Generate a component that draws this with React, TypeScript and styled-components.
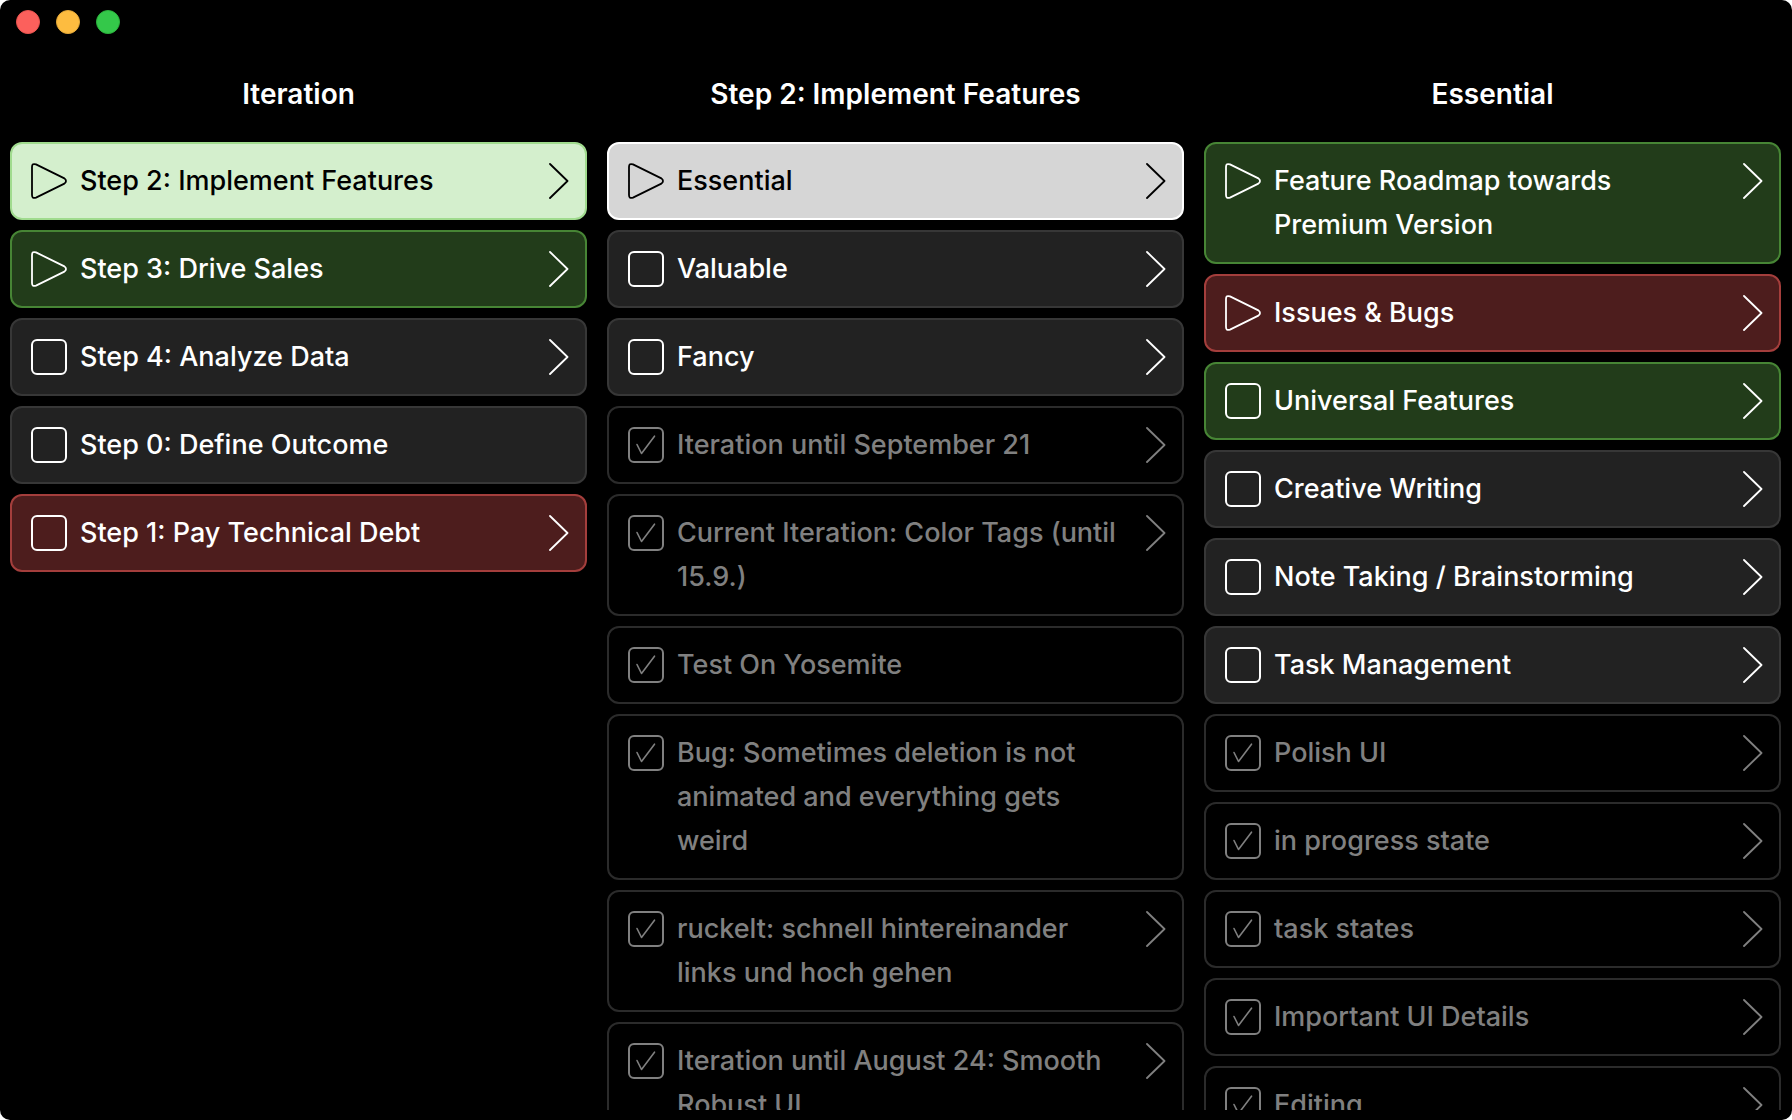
import React, { useId, useState } from 'react';
import styled, { createGlobalStyle, css } from 'styled-components';

type Tone = 'plain' | 'green' | 'red' | 'selected' | 'selectedGreen' | 'done';
type Status = 'active' | 'open' | 'done';

interface Task {
  title: string;
  status: Status;
  tone: Tone;
  nested?: boolean;
}

interface TaskColumn {
  heading: string;
  tasks: Task[];
}

const tones: Record<Tone, { fill: string; edge: string; ink: string }> = {
  plain: { fill: '#222222', edge: '#373737', ink: '#ffffff' },
  green: { fill: '#223c1a', edge: '#478535', ink: '#ffffff' },
  red: { fill: '#4d1d1d', edge: '#a43e3c', ink: '#ffffff' },
  selected: { fill: '#d6d6d6', edge: '#ffffff', ink: '#000000' },
  selectedGreen: { fill: '#d4efcd', edge: '#a0db8e', ink: '#000000' },
  done: { fill: '#000000', edge: '#2b2b2b', ink: '#808080' },
};

const task = (title: string, status: Status, tone: Tone, nested = true): Task => ({
  title,
  status,
  tone,
  nested,
});

const columns: TaskColumn[] = [
  {
    heading: 'Iteration',
    tasks: [
      task('Step 2: Implement Features', 'active', 'selectedGreen'),
      task('Step 3: Drive Sales', 'active', 'green'),
      task('Step 4: Analyze Data', 'open', 'plain'),
      task('Step 0: Define Outcome', 'open', 'plain', false),
      task('Step 1: Pay Technical Debt', 'open', 'red'),
    ],
  },
  {
    heading: 'Step 2: Implement Features',
    tasks: [
      task('Essential', 'active', 'selected'),
      task('Valuable', 'open', 'plain'),
      task('Fancy', 'open', 'plain'),
      task('Iteration until September 21', 'done', 'done'),
      task('Current Iteration: Color Tags (until 15.9.)', 'done', 'done'),
      task('Test On Yosemite', 'done', 'done', false),
      task('Bug: Sometimes deletion is not animated and everything gets weird', 'done', 'done', false),
      task('ruckelt: schnell hintereinander links und hoch gehen', 'done', 'done'),
      task('Iteration until August 24: Smooth Robust UI', 'done', 'done'),
    ],
  },
  {
    heading: 'Essential',
    tasks: [
      task('Feature Roadmap towards Premium Version', 'active', 'green'),
      task('Issues & Bugs', 'active', 'red'),
      task('Universal Features', 'open', 'green'),
      task('Creative Writing', 'open', 'plain'),
      task('Note Taking / Brainstorming', 'open', 'plain'),
      task('Task Management', 'open', 'plain'),
      task('Polish UI', 'done', 'done'),
      task('in progress state', 'done', 'done'),
      task('task states', 'done', 'done'),
      task('Important UI Details', 'done', 'done'),
      task('Editing', 'done', 'done'),
    ],
  },
];

const GlobalStyle = createGlobalStyle`
  *, *::before, *::after { box-sizing: border-box; }
  body {
    margin: 0;
    background: #ffffff;
    font-family: Inter, "Liberation Sans", sans-serif;
  }
`;

const bareButton = css`
  appearance: none;
  margin: 0;
  padding: 0;
  border: 0;
  background: none;
  color: inherit;
  font: inherit;
`;

const Window = styled.div`
  display: flex;
  flex-direction: column;
  height: 100vh;
  padding-bottom: 10px;
  overflow: hidden;
  border-radius: 10px;
  background: #000000;
`;

const TitleBar = styled.header`
  display: flex;
  flex: none;
  align-items: center;
  gap: 16px;
  height: 44px;
  padding: 0 16px;
`;

const WindowButton = styled.button<{ $color: string; $rim: string }>`
  ${bareButton}
  width: 24px;
  height: 24px;
  border: 1px solid ${(p) => p.$rim};
  border-radius: 50%;
  background: ${(p) => p.$color};
`;

const Board = styled.main`
  display: grid;
  flex: 1;
  grid-template-columns: repeat(3, minmax(0, 1fr));
  gap: 20px;
  min-height: 0;
  padding: 0 11px 0 10px;
`;

const Column = styled.section`
  display: flex;
  flex-direction: column;
  min-height: 0;
`;

const Heading = styled.h2`
  flex: none;
  margin: 0;
  padding: 28px 0 26px;
  color: #ffffff;
  font-size: 28px;
  font-weight: 600;
  line-height: 44px;
  text-align: center;
`;

const TaskList = styled.ul`
  display: flex;
  flex: 1;
  flex-direction: column;
  gap: 10px;
  min-height: 0;
  margin: 0;
  padding: 0;
  overflow-y: auto;
  list-style: none;
  scrollbar-width: none;
`;

const Card = styled.li<{ $tone: Tone }>`
  display: grid;
  flex: none;
  grid-template-columns: 36px minmax(0, 1fr) 20px;
  gap: 13px;
  align-items: start;
  padding: 15px 16px 15px 19px;
  border: 2px solid ${(p) => tones[p.$tone].edge};
  border-radius: 12px;
  background: ${(p) => tones[p.$tone].fill};
  color: ${(p) => tones[p.$tone].ink};
`;

const StatusSlot = styled.span`
  display: grid;
  align-items: center;
  height: 44px;

  > * {
    grid-area: 1 / 1;
  }
`;

const PlayButton = styled.button`
  ${bareButton}
  height: 36px;
`;

const Tick = styled.input`
  appearance: none;
  width: 36px;
  height: 36px;
  margin: 0;
  border: 2px solid currentColor;
  border-radius: 6px;
  color: inherit;
`;

const Title = styled.label`
  font-size: 27px;
  font-weight: 500;
  line-height: 44px;
`;

const OpenButton = styled.button`
  ${bareButton}
  display: flex;
  align-items: center;
  height: 44px;
`;

const Glyph = styled.svg`
  display: block;
  fill: none;
  stroke: currentColor;
  stroke-linecap: round;
  stroke-linejoin: round;
  pointer-events: none;
`;

const PlayGlyph = () => (
  <Glyph width="36" height="36" viewBox="0 0 36 36" strokeWidth="1.8" aria-hidden="true">
    <path d="M1 4V32Q1 36 5 34.6L33.4 20.6Q36.6 18 33.4 15.4L5 1.4Q1 0 1 4Z" />
  </Glyph>
);

const CheckGlyph = () => (
  <Glyph width="36" height="36" viewBox="0 0 36 36" strokeWidth="1.6" aria-hidden="true">
    <path d="M9 17.5L13.5 26.5L26.5 9.2" />
  </Glyph>
);

const ChevronGlyph = () => (
  <Glyph width="20" height="36" viewBox="0 0 20 36" strokeWidth="1.8" aria-hidden="true">
    <path d="M1 1L18.5 18L1 35" />
  </Glyph>
);

function TaskCard({ item }: { item: Task }) {
  const id = useId();
  const [checked, setChecked] = useState(item.status === 'done');

  return (
    <Card $tone={item.tone}>
      <StatusSlot>
        {item.status === 'active' ? (
          <PlayButton id={id} type="button">
            <PlayGlyph />
          </PlayButton>
        ) : (
          <>
            <Tick
              id={id}
              type="checkbox"
              checked={checked}
              onChange={(event) => setChecked(event.target.checked)}
            />
            {checked && <CheckGlyph />}
          </>
        )}
      </StatusSlot>
      <Title htmlFor={id}>{item.title}</Title>
      {item.nested && (
        <OpenButton type="button" aria-label={`Open ${item.title}`}>
          <ChevronGlyph />
        </OpenButton>
      )}
    </Card>
  );
}

export default function App() {
  return (
    <>
      <GlobalStyle />
      <Window>
        <TitleBar>
          <WindowButton type="button" aria-label="Close" $color="#fc605c" $rim="#e9544f" />
          <WindowButton type="button" aria-label="Minimize" $color="#fdbc40" $rim="#e4a838" />
          <WindowButton type="button" aria-label="Zoom" $color="#34c84a" $rim="#2bb23c" />
        </TitleBar>
        <Board>
          {columns.map((column) => (
            <Column key={column.heading}>
              <Heading>{column.heading}</Heading>
              <TaskList>
                {column.tasks.map((item) => (
                  <TaskCard key={item.title} item={item} />
                ))}
              </TaskList>
            </Column>
          ))}
        </Board>
      </Window>
    </>
  );
}
